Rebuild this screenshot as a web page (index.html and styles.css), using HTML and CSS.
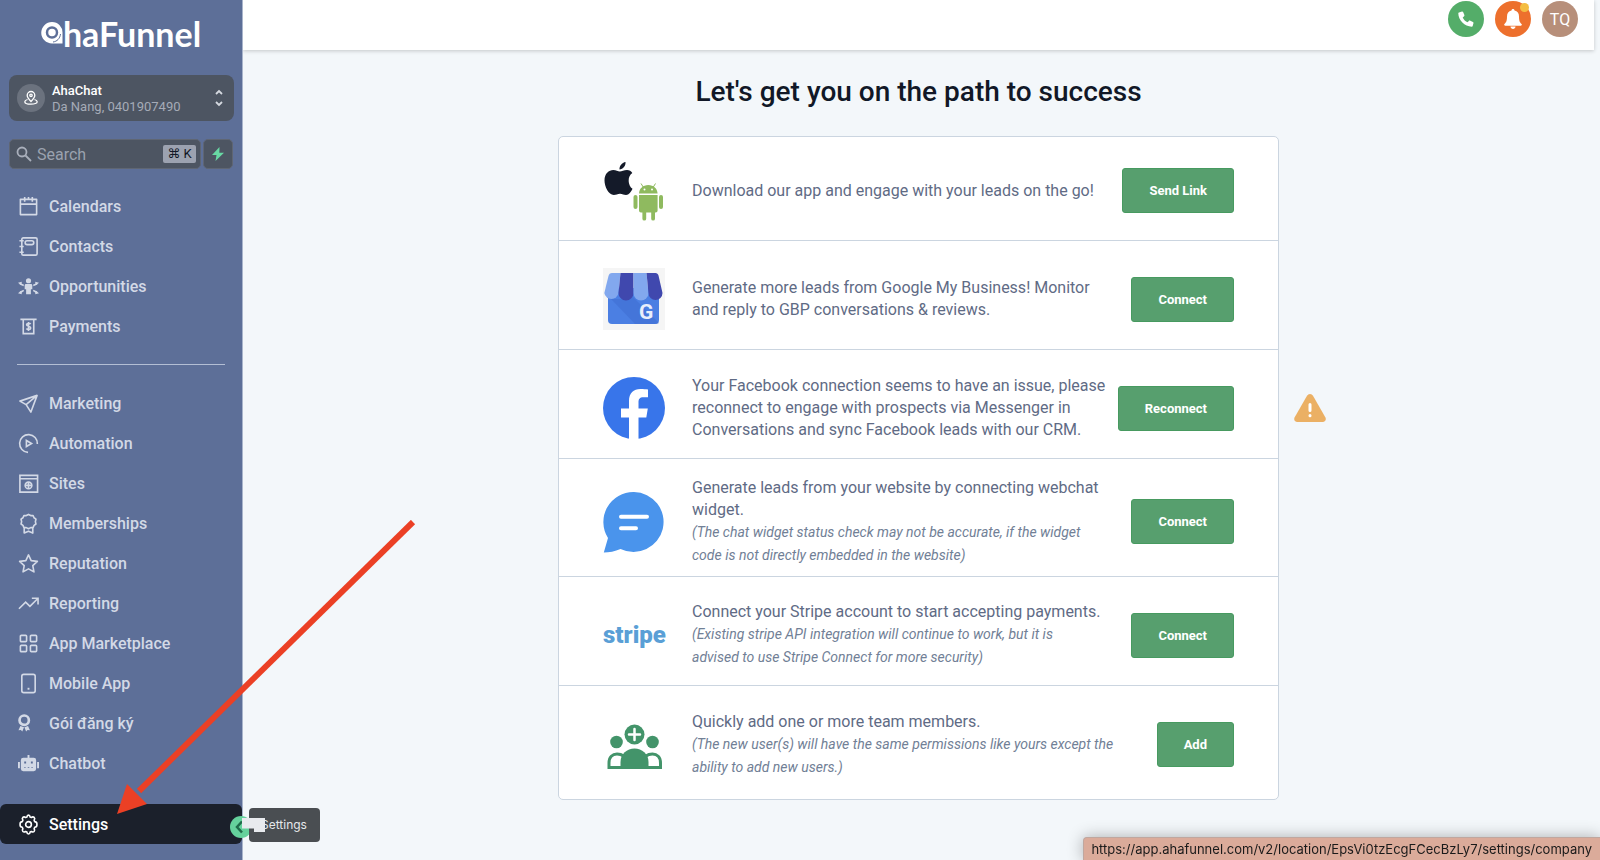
FILE: index.html
```html
<!DOCTYPE html>
<html lang="en">

<head>
  <meta charset="UTF-8" />
  <meta name="viewport" content="width=device-width, initial-scale=1.0" />
  <title>AhaFunnel</title>
  <link rel="stylesheet" href="styles.css">
</head>

<body>
  <div class="layout">
    <aside class="sidebar">
      <a href="#" class="logo">
        <svg width="22" height="24" viewBox="0 0 22 24">
          <path d="M11 1a10.500 10.500 0 1 0 0 21.500H21.500V12A10.500 10.500 0 0 0 11 1z" fill="#fff" />
          <circle cx="11" cy="11.500" r="5" fill="none" stroke="#5d6f98" stroke-width="2.500" />
          <path d="M12 21c4-.5 7-3.500 7.500-8" fill="none" stroke="#5d6f98" stroke-width="1" />
        </svg>
        <span>haFunnel</span>
      </a>

      <button class="account">
        <span class="account-icon">
          <svg width="16" height="16" viewBox="0 0 16 16" fill="none" stroke="#fff" stroke-width="1.300">
            <path d="M8 11.500C5.500 9 4.200 7.200 4.200 5.300a3.800 3.800 0 0 1 7.600 0C11.800 7.200 10.500 9 8 11.500z" />
            <circle cx="8" cy="5.300" r="1.200" />
            <path d="M4.500 9.500C2.800 10 1.800 10.800 1.800 11.700c0 1.500 2.800 2.500 6.200 2.500s6.200-1 6.200-2.500c0-.9-1-1.700-2.700-2.200" />
          </svg>
        </span>
        <span class="account-text">
          <strong>AhaChat</strong>
          <span>Da Nang, 0401907490</span>
        </span>
        <svg width="10" height="18" viewBox="0 0 10 18" fill="none" stroke="#d5d9e0" stroke-width="1.800">
          <path d="M2 5l3-3 3 3M2 13l3 3 3-3" />
        </svg>
      </button>

      <div class="search-row">
        <label class="search">
          <svg width="16" height="16" viewBox="0 0 16 16" fill="none" stroke="#a9afbb" stroke-width="1.800">
            <circle cx="6" cy="6" r="4.500" />
            <path d="M9.500 9.500L15 15" />
          </svg>
          <input type="text" placeholder="Search" aria-label="Search" />
          <kbd>⌘ K</kbd>
        </label>
        <button class="quick" aria-label="Quick actions">
          <svg width="14" height="14" viewBox="0 0 14 14">
            <path d="M8.500 0L1 8h4.500L4.500 14 13 5.800H8.300z" fill="#68d9a4" />
          </svg>
        </button>
      </div>

      <nav class="menu">
        <a href="#"><svg viewBox="0 0 22 22"><path d="M2.500 3.500h17v16h-17zM2.500 8.500h17M7 1v5M11 1v3M15 1v5" stroke-linejoin="round" /></svg>Calendars</a>
        <a href="#"><svg viewBox="0 0 22 22"><rect x="4" y="2" width="16" height="18" rx="1.500" /><rect x="7.500" y="5" width="9" height="4" rx="2" /><path d="M1.500 5H6M1.500 11H6M1.500 17H6" /></svg>Contacts</a>
        <a href="#"><svg viewBox="0 0 22 22"><g fill="currentColor" stroke="none"><circle cx="11" cy="5" r="2.700" /><path d="M8.500 8.300h5c1 0 1.500.7 1.500 1.700v4h-1.500V19h-5v-5H7v-4c0-1 .5-1.700 1.500-1.700z" /><path d="M0 7l4-1-.5 4zM0 18l4 1.200-.5-4zM22 7l-4-1 .5 4zM22 18l-4 1.200.5-4z" /></g><path d="M2 8l4 2M2 17.500l4-2.500M20 8l-4 2M20 17.500L16 15" /></svg>Opportunities</a>
        <a href="#"><svg viewBox="0 0 22 22"><path d="M2.500 3.500h17M5.500 3.500v15h11v-15M13.300 8.500c-.7-1-4.300-1.200-4.300.7s4.300 1.200 4.300 3.300-3.700 1.800-4.500.6M11 6.300v9.400" /></svg>Payments</a>
      </nav>

      <hr class="divider" />

      <nav class="menu">
        <a href="#"><svg viewBox="0 0 22 22"><path d="M20 2.500L2 8.500l6.500 3.700L13.500 20zM20 2.500L8.500 12.200" stroke-linejoin="round" /></svg>Marketing</a>
        <a href="#"><svg viewBox="0 0 22 22"><path d="M10.500 20.300A9.300 9.300 0 1 1 20.300 11.500" /><path d="M8.800 7.800v6.400l5.400-3.200z" /></svg>Automation</a>
        <a href="#"><svg viewBox="0 0 22 22"><path d="M2 2.500h18.500v17.500H2zM2 6h18.500" /><circle cx="11" cy="13" r="3.500" /><path d="M7.500 13h7M11 9.500v7" /></svg>Sites</a>
        <a href="#"><svg viewBox="0 0 22 22"><path d="M11 1.500l2.300 1.200 2.500 0 1 2.300 2 1.500-.6 2.500.6 2.500-2 1.500-1 2.300h-2.500L11 16.500l-2.300-1.200H6.200l-1-2.300-2-1.500.6-2.500-.6-2.500 2-1.500 1-2.300h2.500zM6.500 15.500v5.500l4.500-2 4.500 2v-5.500" stroke-linejoin="round" /></svg>Memberships</a>
        <a href="#"><svg viewBox="0 0 22 22"><path d="M11 2l2.800 6 6.500.8-4.800 4.500 1.200 6.500L11 16.600l-5.700 3.200 1.200-6.500L1.700 8.800l6.500-.8z" stroke-linejoin="round" /></svg>Reputation</a>
        <a href="#"><svg viewBox="0 0 22 22"><path d="M1 16.500l7-7 4.500 4.500L20.500 6M14.500 5.500h6.500V12" /></svg>Reporting</a>
        <a href="#"><svg viewBox="0 0 22 22"><rect x="2.500" y="2.500" width="6.500" height="6.500" rx="1" /><rect x="13" y="2.500" width="6.500" height="6.500" rx="1" /><rect x="2.500" y="13" width="6.500" height="6.500" rx="1" /><rect x="13" y="13" width="6.500" height="6.500" rx="1" /></svg>App Marketplace</a>
        <a href="#"><svg viewBox="0 0 22 22"><rect x="4" y="1.500" width="14" height="19" rx="2" /><path d="M10 16.500h2" stroke-width="2" /></svg>Mobile App</a>
        <a href="#"><svg viewBox="0 0 22 22"><circle cx="6.500" cy="7.500" r="4.900" stroke-width="2.800" /><path d="M2.500 13.500L.5 18l2.500-.2 1.500 1.700L6.300 15zM10.500 13.500l2 4.500-2.500-.2-1.500 1.700L6.700 15z" fill="currentColor" stroke="none" /></svg>Gói đăng ký</a>
        <a href="#"><svg viewBox="0 0 22 22"><path fill="currentColor" fill-rule="evenodd" stroke="none" d="M10 2h2v3h4.500A2.500 2.500 0 0 1 19 7.500v9a2.500 2.500 0 0 1-2.500 2.500h-11A2.500 2.500 0 0 1 3 16.500v-9A2.500 2.500 0 0 1 5.500 5H10zM0 9.500h2V16H0zM20 9.500h2V16h-2zM6.500 9v2h2V9zM13.500 9v2h2V9zM6.500 14.800v1h1.500v-1zM10.200 14.800v1h1.600v-1zM14 14.800v1h1.500v-1z" /></svg>Chatbot</a>
      </nav>

      <a href="#" class="settings">
        <svg viewBox="0 0 22 22"><path d="M11 1.200c1 0 1.500.6 1.700 2l1.300.5c1.200-.9 2-.9 2.900-.1s.8 1.700 0 2.900l.6 1.500c1.500.2 2.300.9 2.300 2.200v1.600c0 1.200-.8 1.900-2.300 2.100l-.6 1.500c.8 1.200.8 2.100 0 2.900s-1.700.8-2.900 0l-1.300.6c-.2 1.400-.7 2.100-1.700 2.100s-1.500-.7-1.700-2.100L8 18.300c-1.200.8-2.100.8-2.900 0s-.8-1.700 0-2.900l-.6-1.500c-1.500-.2-2.300-.9-2.300-2.100v-1.600c0-1.300.8-2 2.300-2.200l.6-1.500c-.8-1.200-.8-2.100 0-2.900s1.700-.8 2.900.1l1.300-.5c.2-1.400.7-2 1.700-2z" stroke-linejoin="round" /><circle cx="11" cy="11" r="3" /></svg>
        Settings
      </a>

      <button class="collapse" aria-label="Collapse menu">
        <svg width="24" height="24" viewBox="0 0 24 24">
          <circle cx="12" cy="12" r="11" fill="#65d19c" />
          <path d="M13 6.500L8 12l5 5.500" fill="none" stroke="#1f6b4a" stroke-width="2.500" />
        </svg>
      </button>
      <div class="tooltip">Settings</div>
      <svg class="cursor" width="24" height="14" viewBox="0 0 24 14">
        <path d="M0 0H23V14H12V10.500H0z" fill="#e8eaee" />
      </svg>
    </aside>

    <div class="page">
      <header class="topbar">
        <button class="round phone" aria-label="Call">
          <svg width="16" height="16" viewBox="0 0 16 16">
            <path d="M1 1.500L4 .5c.5-.1.9.1 1.100.6l1.300 3c.2.400 0 .8-.3 1.100L4.700 6.400c1 2.200 2.700 3.900 4.900 4.900l1.200-1.400c.3-.4.700-.5 1.100-.3l3 1.300c.5.200.7.600.6 1.100l-.8 3c-.1.500-.5.700-.9.700C6.700 15.700.3 9.300.3 2.300c0-.4.3-.7.700-.8z" fill="#fff" />
          </svg>
        </button>
        <button class="round bell" aria-label="Notifications">
          <svg width="18" height="20" viewBox="0 0 18 20" fill="#fff">
            <path d="M9 0c1 0 1.500.6 1.500 1.600C13.500 2.300 15 4.500 15 7.500c0 5 1.200 6.200 2.500 7.500.8.900.3 1.700-.7 1.700H1.200c-1 0-1.500-.8-.7-1.700C1.800 13.700 3 12.500 3 7.500c0-3 1.500-5.200 4.500-5.900C7.500.6 8 0 9 0z" />
            <path d="M6.500 17.500h5c0 3.200-5 3.200-5 0z" />
          </svg>
          <span class="dot"></span>
        </button>
        <button class="round avatar">TQ</button>
      </header>

      <main class="content">
        <h1>Let's get you on the path to success</h1>

        <div class="card">
          <section class="step app">
            <svg class="step-icon" viewBox="0 0 62 62">
              <path d="M16.500 9.500c-.3-3.500 2.500-7 6-7.500.4 3.700-2.500 7.200-6 7.500zM29.500 28.800C28 32 26 35 23 35c-2.300 0-3.400-1.300-6-1.300S13.200 35 10.800 35C5.500 35 1.500 26.500 1.500 20.500 1.500 13.500 5.800 10 10.300 10c2.700 0 4.600 1.500 6.500 1.500S21 10 24 10c2.300 0 4.300 1.200 5.300 2.900-5.200 3.200-4.500 12.700.2 15.900z" fill="#141a29" />
              <g fill="#8fba5f">
                <path d="M36 33.500c.3-5 4-8.500 9.300-8.500s9 3.500 9.300 8.500zM36 35h18.600v15.500a2 2 0 0 1-2 2H52v6.200a1.900 1.900 0 0 1-3.800 0v-6.200h-5v6.200a1.900 1.900 0 0 1-3.800 0v-6.200H38a2 2 0 0 1-2-2z" />
                <rect x="30.500" y="35" width="4" height="14" rx="2" />
                <rect x="56" y="35" width="4" height="14" rx="2" />
              </g>
              <path d="M38 23.500l2.500 4M52.500 23.500l-2.500 4" stroke="#8fba5f" stroke-width="1" />
              <circle cx="41.500" cy="29.500" r="1" fill="#fff" /><circle cx="49" cy="29.500" r="1" fill="#fff" />
            </svg>
            <div class="step-text">
              <p>Download our app and engage with your leads on the go!</p>
            </div>
            <button class="action">Send Link</button>
          </section>

          <section class="step">
            <svg class="step-icon" viewBox="0 0 62 62">
              <path d="M0 0h62v62H0z" fill="#f5f5f5" />
              <path d="M5 20h51v32a4 4 0 0 1-4 4H9a4 4 0 0 1-4-4z" fill="#4b7fe3" />
              <path d="M28 27l28 28c-1 .8-2 1-4 1H32L8 31h15z" fill="#3d6bd0" opacity=".5" />
              <path d="M9 5h8.500l-2 20a7.200 7.200 0 0 1-14.200 0L5.500 8C6 6 7 5 9 5z" fill="#82a8ee" />
              <path d="M17.500 5h13v20a7.500 7.500 0 0 1-15 0z" fill="#4048ae" />
              <path d="M30.500 5h13l2 20a7.500 7.500 0 0 1-15 0z" fill="#82a8ee" />
              <path d="M43.500 5h9c1.500 0 2.500 1 3 2.500L59.500 25a7 7 0 0 1-14 0z" fill="#4048ae" />
              <text x="36" y="51" class="store-g">G</text>
            </svg>
            <div class="step-text">
              <p>Generate more leads from Google My Business! Monitor<br>and reply to GBP conversations &amp; reviews.</p>
            </div>
            <button class="action">Connect</button>
          </section>

          <section class="step">
            <svg class="step-icon" viewBox="0 0 62 62">
              <circle cx="31" cy="31" r="31" fill="#3875ea" />
              <path d="M26 62V40.500h-8V31.500h8V24c0-8 4.500-12 11.500-12 3 0 5.500.2 7.500.6v7.700h-4.500c-4 0-5 2-5 5v6.200h9.300l-1.500 9h-7.800V62z" fill="#fff" />
            </svg>
            <div class="step-text">
              <p>Your Facebook connection seems to have an issue, please<br>reconnect to engage with prospects via Messenger in<br>Conversations and sync Facebook leads with our CRM.</p>
            </div>
            <button class="action">Reconnect</button>
            <svg class="warning" width="32" height="28" viewBox="0 0 32 28">
              <path d="M13 1.800a3.500 3.500 0 0 1 6 0l12.300 21.400c1.300 2.300 0 4.800-2.600 4.800H3.300C.7 28-.6 25.500.700 23.200z" fill="#ebb064" />
              <path d="M16 10.500v6M16 21.500v.2" stroke="#fff" stroke-width="3" stroke-linecap="round" />
            </svg>
          </section>

          <section class="step chat">
            <svg class="step-icon" viewBox="0 0 62 62">
              <path d="M31 1a30 30 0 1 1-13.500 57C12 60.500 6 61.500.8 61.500L5 47A30 30 0 0 1 31 1z" fill="#4a94ec" />
              <path d="M18 25.800h26M18 37.200h15" stroke="#fff" stroke-width="4" stroke-linecap="round" />
            </svg>
            <div class="step-text">
              <p>Generate leads from your website by connecting webchat<br>widget.</p>
              <p class="note">(The chat widget status check may not be accurate, if the widget<br>code is not directly embedded in the website)</p>
            </div>
            <button class="action">Connect</button>
          </section>

          <section class="step">
            <div class="stripe">stripe</div>
            <div class="step-text">
              <p>Connect your Stripe account to start accepting payments.</p>
              <p class="note">(Existing stripe API integration will continue to work, but it is<br>advised to use Stripe Connect for more security)</p>
            </div>
            <button class="action">Connect</button>
          </section>

          <section class="step team">
            <svg class="step-icon" viewBox="0 0 62 62">
              <g fill="#43946a">
                <circle cx="13.500" cy="28" r="6.300" /><circle cx="49.500" cy="28" r="6.300" /><circle cx="31.500" cy="20.500" r="10" />
                <path d="M17.500 55V48c0-8 6.500-13.500 14-13.500S45.500 40 45.500 48v7z" />
              </g>
              <path d="M19 53.500H6V49c0-6 3.500-9 8-9 3 0 5 .8 6.500 2M44 53.500h13.500V49c0-6-3.500-9-8-9-3 0-5 .8-6.500 2" fill="none" stroke="#43946a" stroke-width="3" />
              <path d="M31.500 15v11M26 20.500h11" stroke="#fff" stroke-width="2.500" stroke-linecap="round" />
            </svg>
            <div class="step-text">
              <p>Quickly add one or more team members.</p>
              <p class="note">(The new user(s) will have the same permissions like yours except the<br>ability to add new users.)</p>
            </div>
            <button class="action">Add</button>
          </section>
        </div>
      </main>
    </div>
  </div>

  <svg class="pointer" width="300" height="296" viewBox="0 0 300 296">
    <path d="M296 2L22 271" stroke="#eb4025" stroke-width="6" />
    <path d="M0 294L10 264L30 284z" fill="#eb4025" />
  </svg>
  <div class="status">https://app.ahafunnel.com/v2/location/EpsVi0tzEcgFCecBzLy7/settings/company</div>
</body>

</html>
```
FILE: styles.css
```css
* {
  box-sizing: border-box;
}

body {
  margin: 0;
  background-color: #f3f7fa;
  font-family: Roboto, "Liberation Sans", sans-serif;
}

a {
  color: inherit;
  text-decoration: none;
}

button {
  border: none;
  padding: 0;
  font-family: inherit;
  cursor: pointer;
}

.layout {
  display: flex;
  min-height: 100vh;
}

/* sidebar */
.sidebar {
  position: relative;
  flex: none;
  width: 243px;
  background-color: #5d6f98;
  border-right: 1px solid #a9b5cc;
  color: #d3d9e6;
}

.logo {
  display: flex;
  align-items: center;
  justify-content: center;
  height: 66px;
  color: white;
  font-family: Lato, sans-serif;
  font-size: 34px;
  font-weight: bold;
}

.account {
  display: flex;
  align-items: center;
  gap: 7px;
  width: 225px;
  height: 46px;
  margin: 9px 9px 18px;
  padding: 0 10px 0 8px;
  border-radius: 8px;
  background-color: #4d5562;
  text-align: left;
}

.account-icon {
  display: flex;
  align-items: center;
  justify-content: center;
  width: 28px;
  height: 28px;
  border-radius: 50%;
  background-color: #6b727e;
}

.account-text {
  flex: 1;
  padding-top: 2px;
  color: #a5abb7;
  font-size: 13px;
  line-height: 16px;
}

.account-text strong {
  display: block;
  color: white;
  font-weight: 500;
}

.search-row {
  display: flex;
  gap: 2px;
  height: 30px;
  margin: 0 9px 17px;
}

.search,
.quick {
  display: flex;
  align-items: center;
  border: 1px solid #5f6673;
  border-radius: 5px;
  background-color: #4d5562;
}

.search {
  flex: 1;
  gap: 5px;
  padding: 0 4px 0 6px;
}

.search input {
  flex: 1;
  width: 40px;
  padding: 0;
  border: none;
  outline: none;
  background: none;
  color: white;
  font-family: inherit;
  font-size: 16px;
}

.search input::placeholder {
  color: #9ba2af;
}

.search kbd {
  width: 33px;
  border-radius: 2px;
  background-color: #9ca2b0;
  color: #111827;
  font-family: Roboto, "DejaVu Sans", sans-serif;
  font-size: 13px;
  line-height: 18px;
  text-align: center;
  white-space: nowrap;
}

.quick {
  justify-content: center;
  width: 30px;
}

.menu a,
.settings {
  display: flex;
  align-items: center;
  gap: 10px;
  height: 40px;
  padding-left: 18px;
  font-size: 16px;
  font-weight: 500;
}

.menu svg,
.settings svg {
  width: 21px;
  height: 21px;
  fill: none;
  stroke: currentColor;
  stroke-width: 1.7;
}

.divider {
  height: 1px;
  margin: 18px 17px;
  border: none;
  background-color: #b3bed4;
}

.settings {
  margin-top: 21px;
  border-radius: 6px;
  background-color: #1b202b;
  color: white;
}

.collapse {
  position: absolute;
  top: 815px;
  left: 229px;
  width: 24px;
  height: 24px;
  background: none;
}

.tooltip {
  position: absolute;
  top: 808px;
  left: 249px;
  width: 71px;
  padding-left: 12px;
  border-radius: 4px;
  background-color: #4a4e52;
  color: #e6e8eb;
  font-family: Inter, sans-serif;
  font-size: 12px;
  line-height: 34px;
}

.cursor {
  position: absolute;
  top: 818px;
  left: 242px;
}

/* top bar */
.page {
  flex: 1;
  padding-right: 6px;
}

.topbar {
  display: flex;
  justify-content: flex-end;
  gap: 11px;
  height: 50px;
  padding: 1px 16px 0;
  background-color: white;
  box-shadow: 0 1px 4px rgba(0, 0, 0, 0.2);
}

.round {
  position: relative;
  display: flex;
  align-items: center;
  justify-content: center;
  width: 36px;
  height: 36px;
  border-radius: 50%;
  color: white;
  font-size: 16px;
}

.phone {
  background-color: #54ad69;
}

.bell {
  background-color: #ed702d;
}

.avatar {
  background-color: #b78f7a;
}

.dot {
  position: absolute;
  top: 2px;
  right: 2px;
  width: 9px;
  height: 9px;
  border-radius: 50%;
  background-color: #f4bd42;
}

/* steps */
.content {
  max-width: 721px;
  margin: 0 auto;
}

h1 {
  margin: 26px 0 28px;
  color: #111827;
  font-size: 28px;
  font-weight: 500;
  line-height: 32px;
  text-align: center;
}

.card {
  border: 1px solid #cbd5e0;
  border-radius: 5px;
  background-color: white;
}

.step {
  position: relative;
  display: flex;
  align-items: center;
  min-height: 109px;
  padding: 8px 44px 0;
}

.step + .step {
  border-top: 1px solid #cbd5e0;
}

.step.app {
  min-height: 103px;
  padding-top: 4px;
}

.step.chat {
  min-height: 118px;
}

.step.team {
  min-height: 114px;
  padding-top: 4px;
}

.step-icon,
.stripe {
  flex: none;
  width: 62px;
  margin-right: 27px;
}

.step-text {
  flex: 1;
  white-space: nowrap;
  color: #5f6b85;
  font-size: 16px;
  line-height: 22px;
}

.step-text p {
  margin: 0;
}

.step-text .note {
  color: #718096;
  font-size: 14px;
  font-style: italic;
  line-height: 23px;
}

.store-g {
  fill: #e9eefb;
  font-size: 21px;
  font-weight: bold;
}

.stripe {
  color: #5a9fd6;
  font-size: 24px;
  font-weight: 900;
}

.action {
  height: 45px;
  padding: 0 26px;
  border: 1px solid #479a60;
  border-radius: 3px;
  background-color: #579f6e;
  color: white;
  font-size: 13px;
  font-weight: bold;
}

.warning {
  position: absolute;
  left: calc(100% + 16px);
}

/* overlays */
.pointer {
  position: absolute;
  top: 520px;
  left: 117px;
}

.status {
  position: fixed;
  right: 0;
  bottom: 0;
  padding: 0 8px 0 7px;
  border: 1px solid #c0a79f;
  border-width: 1px 0 0 1px;
  border-top-left-radius: 4px;
  background-color: #dbab9a;
  box-shadow: 0 0 16px rgba(0, 0, 0, 0.3);
  color: #1a1a1a;
  font-family: Inter, sans-serif;
  font-size: 13px;
  line-height: 22px;
}
```
